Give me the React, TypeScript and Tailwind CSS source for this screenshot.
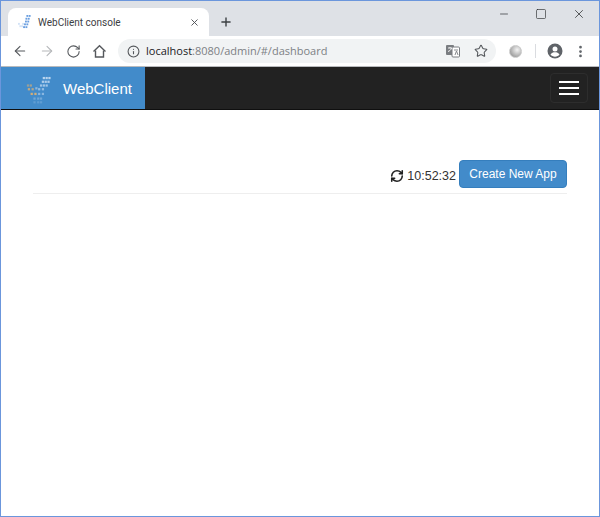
import { ArrowLeft, ArrowRight, RotateCw, Info, Star, Plus, X, Minus, Square, RefreshCw, EllipsisVertical } from "lucide-react";

const sans = "font-['Liberation_Sans',Arial,sans-serif]";
const ui = "font-['Roboto','Noto_Sans',sans-serif]";
const omni = "font-['Open_Sans','Noto_Sans',sans-serif]";

// dotted satellite-ish mark used in the tab and the navbar
function Logo({ dots, size, dot, className }: { dots: number[][]; size: number; dot: number; className: string }) {
  return (
    <svg width={size} height={size} viewBox="0 0 30 30" className={className}>
      {dots.map(([x, y, o, warm], i) => (
        <rect key={i} x={x} y={y} width={dot} height={dot} fill={warm ? "#d2ad78" : "#b9d4ee"} opacity={o} />
      ))}
    </svg>
  );
}

const navDots = [
  [19, 1, 1], [22, 1, 1], [25, 1, 1],
  [18, 5, 0.9], [21, 5, 0.9], [24, 5, 0.9],
  [16, 9, 0.8], [19, 9, 0.8], [22, 9, 0.8],
  [2, 9, 0.6, 1], [5, 9, 0.7, 1], [11, 12, 0.6],
  [3, 13, 0.9, 1], [7, 13, 0.8, 1], [14, 13, 0.7], [18, 13, 0.7],
  [6, 18, 1, 1], [10, 18, 1, 1], [14, 18, 0.6], [18, 18, 0.6],
  [9, 23, 0.4], [13, 23, 0.4], [16, 23, 0.4],
  [9, 27, 0.25], [13, 27, 0.25], [16, 27, 0.25],
];

const tabDots = [
  [18, 0, 1], [23, 0, 1],
  [16, 6, 1], [21, 6, 1],
  [15, 12, 1], [20, 12, 1],
  [13, 18, 1], [18, 18, 1],
  [11, 24, 1], [16, 24, 1],
  [0, 17, 0.3], [3, 22, 0.3], [7, 22, 0.3], [9, 17, 0.3],
];

function TabStrip() {
  return (
    <div className="h-[35px] bg-[#dee1e6] flex items-end shrink-0">
      <div className="ml-[7px] w-[201px] h-[28px] bg-white rounded-t-[8px] flex items-center pl-[10px] pr-[9px]">
        <Logo dots={tabDots} size={14} dot={4} className="[&_rect]:fill-[#6b9fe0]" />
        <span className={`ml-[6px] mt-[1px] flex-1 text-[10px] text-[#3c4043] ${ui}`}>WebClient console</span>
        <X size={11} strokeWidth={2} className="text-[#4a4d51] mt-[1px]" />
      </div>
      <Plus size={14} strokeWidth={2.4} className="ml-[10px] mb-[7px] text-[#3c4043]" />
      <div className="ml-auto self-start flex items-center pt-[6px] pr-[13px] gap-[25px] text-[#2c2e30]">
        <Minus size={12} strokeWidth={1.4} />
        <Square size={12} strokeWidth={1.3} />
        <X size={14} strokeWidth={1.3} />
      </div>
    </div>
  );
}

function Toolbar() {
  return (
    <div className="h-[31px] bg-white flex items-center shrink-0 border-b border-[#b8babd]">
      <div className="flex items-center pl-[11px] gap-[11px]">
        <ArrowLeft size={16} strokeWidth={1.6} className="text-[#55585c]" />
        <ArrowRight size={16} strokeWidth={1.6} className="text-[#b5b7ba]" />
        <RotateCw size={15} strokeWidth={1.7} className="text-[#55585c]" />
        <svg width="15" height="15" viewBox="0 0 15 15" fill="none" stroke="#55585c" strokeWidth="1.4">
          <path d="M1.500 7.500 7.500 1.800l6 5.700" />
          <path d="M3.500 6.500v6.500h8V6.500" />
        </svg>
      </div>
      <div className="ml-[11px] w-[378px] h-[24px] rounded-full bg-[#f1f3f4] flex items-center pl-[9px] pr-[8px]">
        <Info size={13} strokeWidth={2} className="text-[#55585c]" />
        <span className={`ml-[6px] flex-1 text-[11px] text-[#7d8185] ${omni}`}>
          <span className="text-[#202124]">localhost</span>:8080/admin/#/dashboard
        </span>
        <svg width="14" height="14" viewBox="0 0 14 14" className="mr-[14px]">
          <rect x="0" y="1" width="8" height="10" rx="1" fill="#7a7d81" />
          <rect x="6" y="3" width="7.5" height="10" rx="1" fill="#fff" stroke="#7a7d81" strokeWidth="1" />
          <path d="M2 4h4M4 3v1M5.500 4c-.5 2-2 3-3.500 3.500" stroke="#fff" strokeWidth="0.9" fill="none" />
          <path d="M8 6h4M9 11l1.500-4 1.500 4" stroke="#7a7d81" strokeWidth="0.9" fill="none" />
        </svg>
        <Star size={14} strokeWidth={1.8} className="text-[#55585c]" />
      </div>
      <div className="ml-[13px] w-[13px] h-[13px] rounded-full bg-[radial-gradient(circle_at_65%_35%,#f4f4f4,#a4a4a4_70%)] border border-[#c9c9c9]" />
      <div className="ml-[13px] w-px h-[14px] bg-[#dadce0]" />
      <svg width="16" height="16" viewBox="0 0 16 16" className="ml-[11px]">
        <circle cx="8" cy="8" r="7.500" fill="#5f6368" />
        <circle cx="8" cy="6" r="2.500" fill="#fff" />
        <path d="M3.500 11.500c1-1.700 2.700-2.300 4.500-2.300s3.500.6 4.500 2.300c-1 1.300-2.700 2.200-4.500 2.200s-3.500-.9-4.500-2.200z" fill="#fff" />
      </svg>
      <EllipsisVertical size={15} strokeWidth={2.4} className="ml-[10px] text-[#5f6368]" />
    </div>
  );
}

function Navbar() {
  return (
    <div className="h-[43px] bg-[#222222] border-b border-[#0f0f0f] flex items-stretch shrink-0">
      <div className="w-[144px] bg-[#428bca] flex items-center pl-[24px]">
        <Logo dots={navDots} size={28} dot={2.4} className="mt-[3px]" />
        <span className={`ml-[10px] mt-[3px] text-[15px] text-white ${sans}`}>WebClient</span>
      </div>
      <div className="ml-auto mr-[11px] self-center w-[38px] h-[30px] border border-[#2d2d2d] rounded-[4px] flex flex-col items-center justify-center gap-[4px]">
        <span className="w-[20px] h-[2px] bg-white" />
        <span className="w-[20px] h-[2px] bg-white" />
        <span className="w-[20px] h-[2px] bg-white" />
      </div>
    </div>
  );
}

export default function App() {
  return (
    <div className="w-[600px] h-[517px] border border-[#6b96dc] flex flex-col bg-white overflow-hidden">
      <TabStrip />
      <Toolbar />
      <Navbar />
      <div className="pl-[32px] pr-[32px] pt-[50px]">
        <div className="flex items-center justify-end pb-[5px] border-b border-[#eeeeee]">
          <RefreshCw size={14} strokeWidth={2.7} className="text-[#222222] mt-[3px]" />
          <span className={`ml-[3px] mt-[5px] text-[12.5px] text-[#333333] ${sans}`}>10:52:32</span>
          <button className={`ml-[3px] w-[108px] h-[28px] bg-[#428bca] border border-[#357ebd] rounded-[4px] text-[12px] text-white ${sans}`}>
            Create New App
          </button>
        </div>
      </div>
    </div>
  );
}
